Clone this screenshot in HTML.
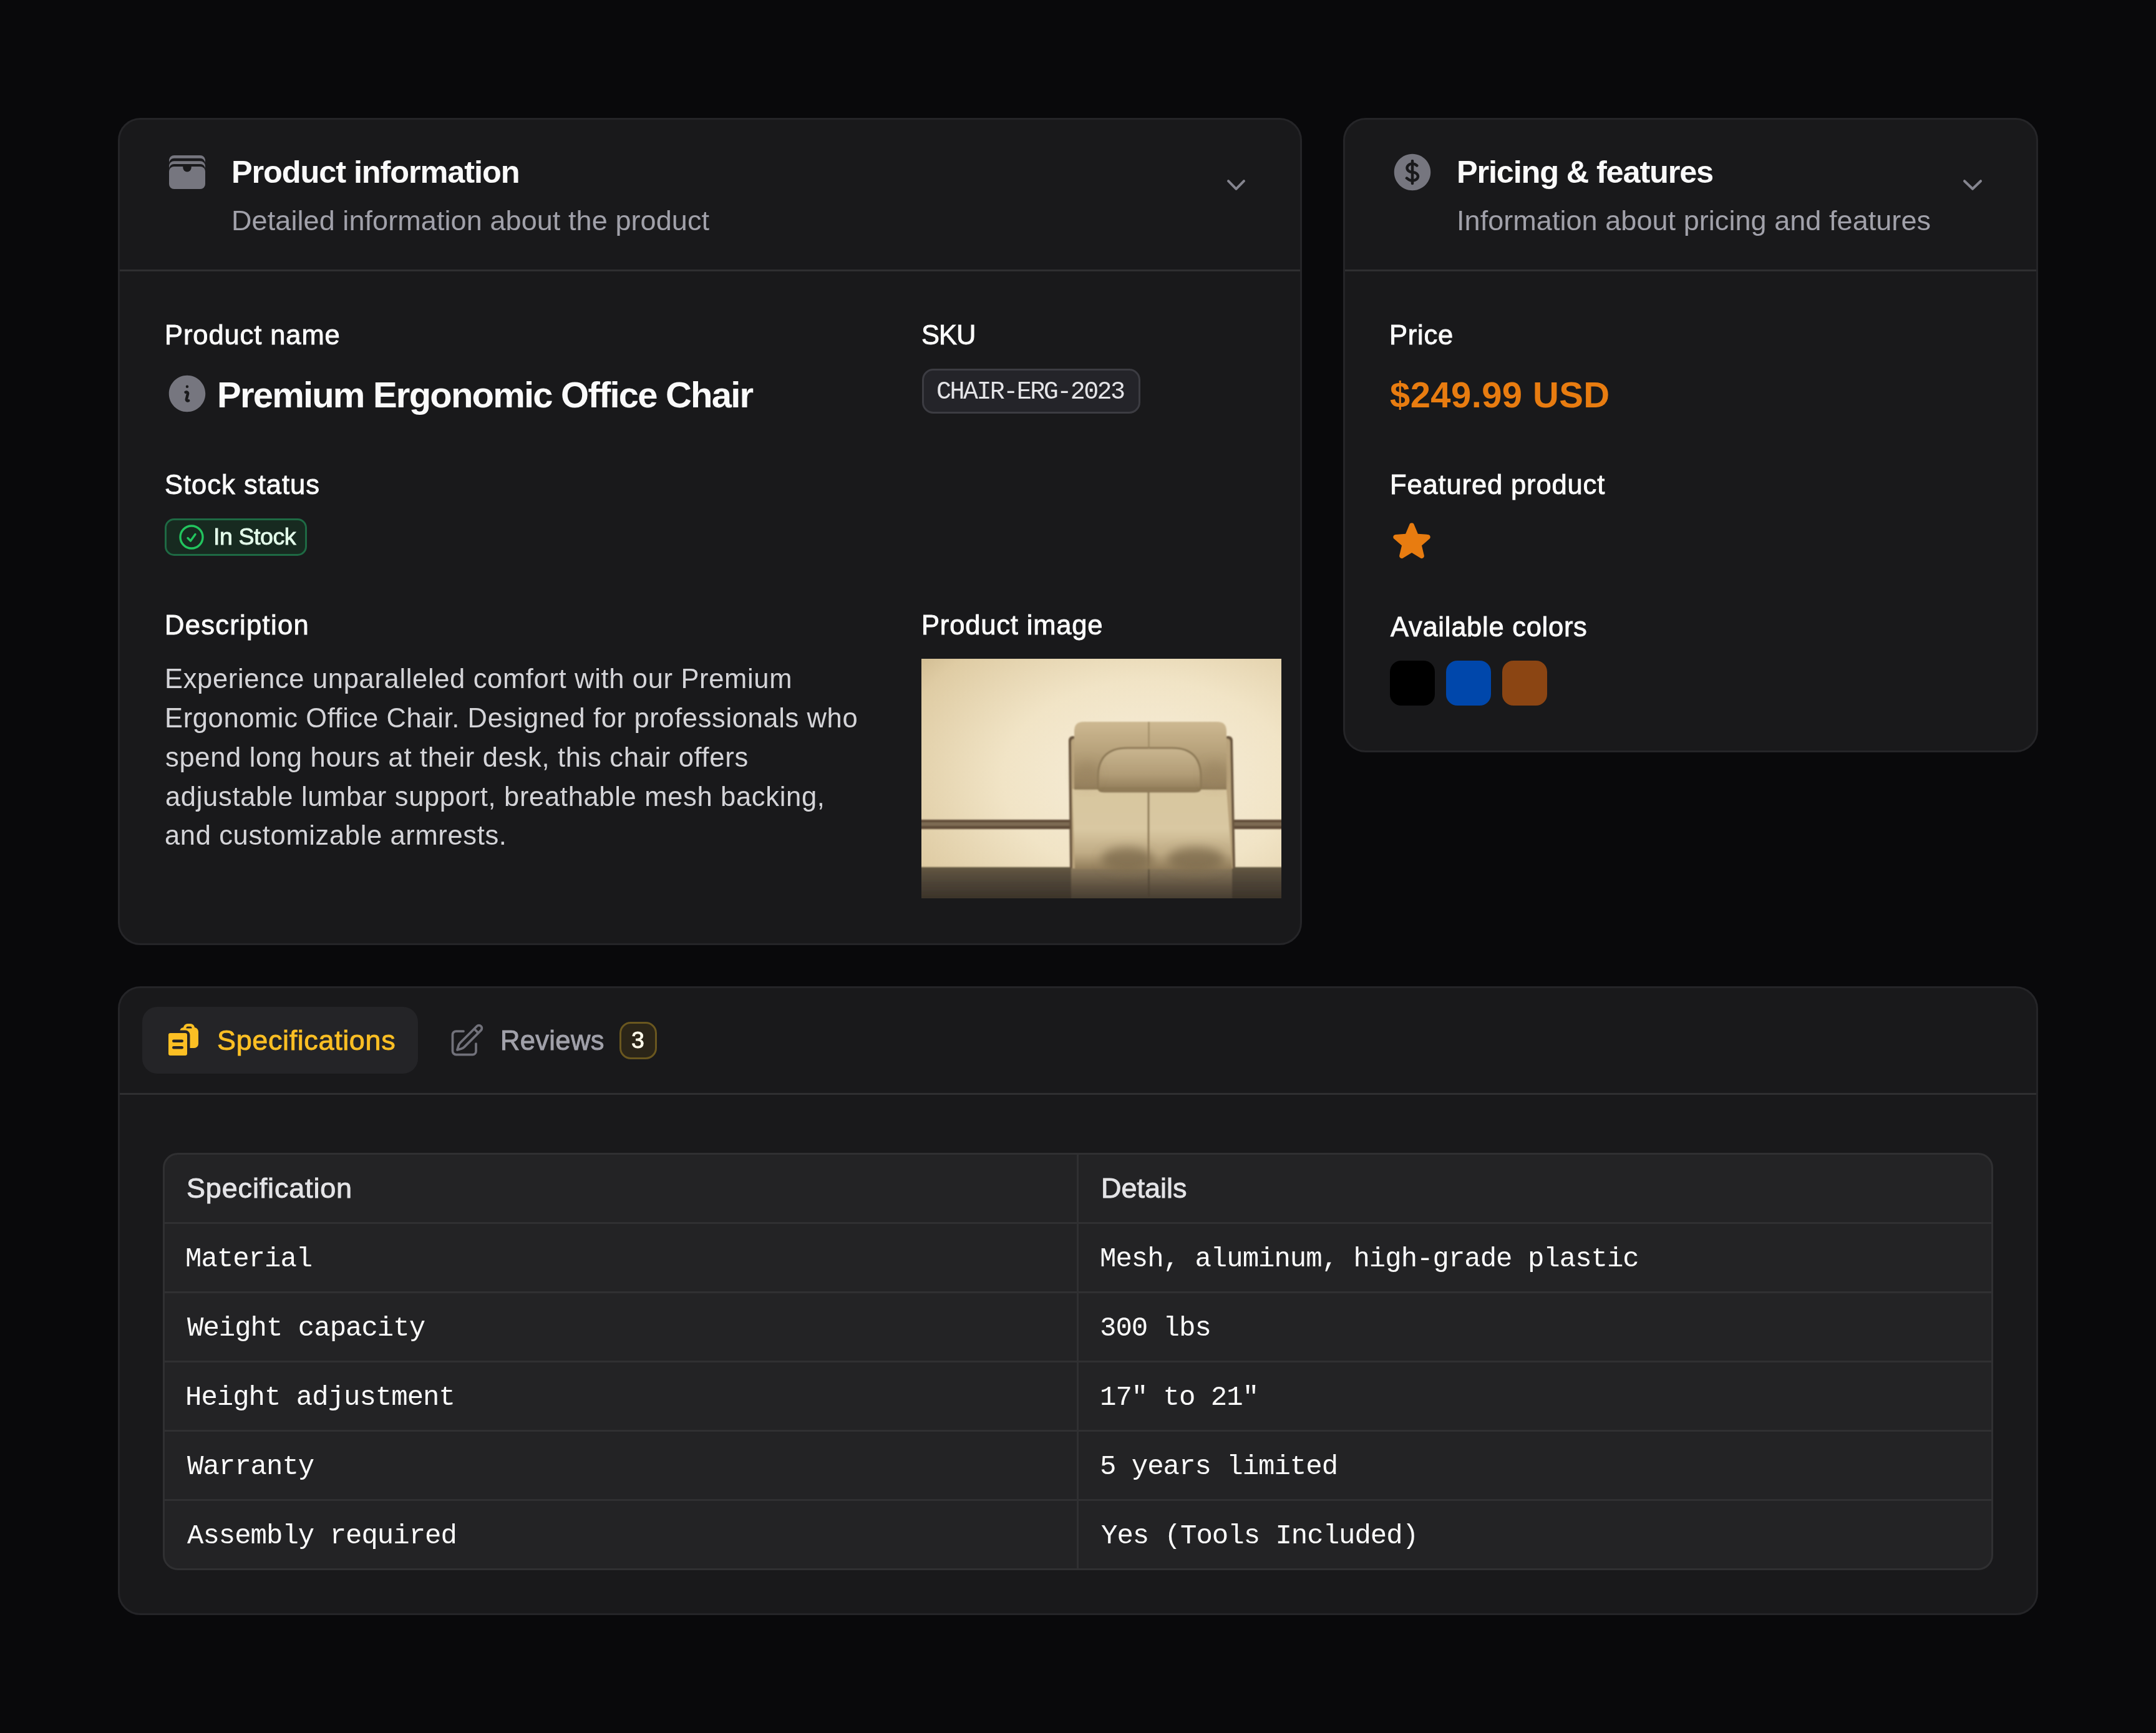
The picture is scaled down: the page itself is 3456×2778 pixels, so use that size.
<!DOCTYPE html><html><head><meta charset="utf-8"><style>
html,body{margin:0;padding:0;}html{overflow:hidden;background:#09090b;}
body{width:3456px;height:2778px;background:#09090b;position:relative;overflow:hidden;font-family:'Liberation Sans', sans-serif;}
.abs{position:absolute;}
.t{position:absolute;white-space:nowrap;line-height:1;will-change:transform;}
.card{position:absolute;box-sizing:border-box;background:#19191b;border:3px solid #252528;border-radius:36px;}
</style></head><body>
<div class="card" style="left:189px;top:189px;width:1898px;height:1326px"></div>
<div class="abs" style="left:192px;top:432px;width:1892px;height:3px;background:#2f2f31"></div>
<div class="card" style="left:2153px;top:189px;width:1114px;height:1017px"></div>
<div class="abs" style="left:2156px;top:432px;width:1108px;height:3px;background:#2f2f31"></div>
<div class="card" style="left:189px;top:1581px;width:3078px;height:1008px"></div>
<div class="abs" style="left:192px;top:1752px;width:3072px;height:3px;background:#2f2f31"></div>
<div class="abs" style="left:228px;top:1614px;width:442px;height:107px;border-radius:24px;background:#242427"></div>
<div class="abs" style="box-sizing:border-box;left:261px;top:1848px;width:2934px;height:669px;border:3px solid #303032;border-radius:24px;background:#232325"></div>
<div class="abs" style="left:264px;top:1959px;width:2928px;height:3px;background:#303032"></div>
<div class="abs" style="left:264px;top:2070px;width:2928px;height:3px;background:#303032"></div>
<div class="abs" style="left:264px;top:2181px;width:2928px;height:3px;background:#303032"></div>
<div class="abs" style="left:264px;top:2292px;width:2928px;height:3px;background:#303032"></div>
<div class="abs" style="left:264px;top:2403px;width:2928px;height:3px;background:#303032"></div>
<div class="abs" style="left:1726px;top:1851px;width:3px;height:2663px;height:663px;background:#303032"></div>
<div class="abs" style="box-sizing:border-box;left:1478px;top:591px;width:350px;height:72px;border:3px solid #3c3c42;border-radius:18px;background:#242429"></div>
<div class="abs" style="box-sizing:border-box;left:264px;top:831px;width:228px;height:60px;border:3px solid #1e6a44;border-radius:15px;background:#172a20"></div>
<div class="abs" style="box-sizing:border-box;left:993px;top:1638px;width:60px;height:60px;border:3px solid #6a571f;border-radius:18px;background:#2b2518"></div>
<div class="abs" style="left:2228px;top:1059px;width:72px;height:72px;border-radius:18px;background:#000000"></div>
<div class="abs" style="left:2318px;top:1059px;width:72px;height:72px;border-radius:18px;background:#0047ab"></div>
<div class="abs" style="left:2408px;top:1059px;width:72px;height:72px;border-radius:18px;background:#8b4513"></div>
<svg class="abs" style="left:0;top:0" width="400" height="400"><path fill="#76767f" d="M271,257 A8,8 0 0 1 279,249 H321 A8,8 0 0 1 329,257 V261.8 A8,8 0 0 0 321,253.8 H279 A8,8 0 0 0 271,261.8 Z M271,266.2 A8,8 0 0 1 279,258.2 H321 A8,8 0 0 1 329,266.2 V271.0 A8,8 0 0 0 321,263.0 H279 A8,8 0 0 0 271,271.0 Z"/><rect x="271" y="267" width="58" height="36" rx="8" fill="#76767f"/><path fill="#19191b" d="M293.3,266 H306.7 V268.8 A6.7,6.7 0 0 1 293.3,268.8 Z"/></svg>
<svg class="abs" style="left:264px;top:595px" width="72" height="72" viewBox="0 0 24 24"><path fill="#76767f" fill-rule="evenodd" d="M2.25 12c0-5.385 4.365-9.75 9.75-9.75s9.75 4.365 9.75 9.75-4.365 9.75-9.75 9.75S2.25 17.385 2.25 12Zm8.706-1.442c1.146-.573 2.437.463 2.126 1.706l-.709 2.836.042-.02a.75.75 0 0 1 .67 1.34l-.04.022c-1.147.573-2.438-.463-2.127-1.706l.71-2.836-.042.02a.75.75 0 1 1-.671-1.34l.041-.022ZM12 9a.75.75 0 1 0 0-1.5.75.75 0 0 0 0 1.5Z"/></svg>
<svg class="abs" style="left:2227.5px;top:240px" width="72" height="72" viewBox="0 0 24 24"><path fill="#76767f" d="M10.464 8.746c.227-.18.497-.311.786-.394v2.795a2.252 2.252 0 0 1-.786-.393c-.394-.313-.546-.681-.546-1.004 0-.323.152-.691.546-1.004ZM12.75 15.662v-2.824c.347.085.664.228.921.421.427.32.579.686.579.991 0 .305-.152.671-.579.991a2.534 2.534 0 0 1-.921.42Z"/><path fill="#76767f" fill-rule="evenodd" d="M12 2.25c-5.385 0-9.75 4.365-9.75 9.75s4.365 9.750 9.75 9.75 9.75-4.365 9.75-9.75S17.385 2.25 12 2.25ZM12.75 6a.75.75 0 0 0-1.5 0v.816a3.836 3.836 0 0 0-1.72.756c-.712.566-1.112 1.35-1.112 2.178 0 .829.4 1.612 1.113 2.178.502.4 1.102.647 1.719.756v2.978a2.536 2.536 0 0 1-.921-.421l-.879-.66a.75.75 0 0 0-.9 1.2l.879.66c.533.4 1.169.645 1.821.75V18a.75.75 0 0 0 1.5 0v-.81a4.124 4.124 0 0 0 1.821-.749c.745-.559 1.179-1.344 1.179-2.191 0-.847-.434-1.632-1.179-2.191a4.122 4.122 0 0 0-1.821-.75V8.354c.29.082.559.213.786.393l.415.33a.75.75 0 0 0 .933-1.175l-.415-.33a3.836 3.836 0 0 0-1.719-.755V6Z"/></svg>
<svg class="abs" style="left:0;top:0" width="3456" height="400"><polyline points="1969,290.2 1981.5,302.8 1994,290.2" fill="none" stroke="#85858f" stroke-width="4" stroke-linecap="round" stroke-linejoin="round"/></svg>
<svg class="abs" style="left:0;top:0" width="3456" height="400"><polyline points="3149,290.2 3162,302.8 3175,290.2" fill="none" stroke="#85858f" stroke-width="4" stroke-linecap="round" stroke-linejoin="round"/></svg>
<svg class="abs" style="left:282.5px;top:837px" width="48" height="48" viewBox="0 0 24 24" fill="none" stroke="#22c55e" stroke-width="1.7" stroke-linecap="round" stroke-linejoin="round"><path d="M9 12.75 11.25 15 15 9.75M21 12a9 9 0 1 1-18 0 9 9 0 0 1 18 0Z"/></svg>
<svg class="abs" style="left:2227px;top:831px" width="72" height="72" viewBox="0 0 24 24"><path fill="#e87c10" fill-rule="evenodd" d="M10.788 3.21c.448-1.077 1.976-1.077 2.424 0l2.082 5.006 5.404.434c1.164.093 1.636 1.545.749 2.305l-4.117 3.527 1.257 5.273c.271 1.136-.964 2.033-1.96 1.425L12 18.354 7.373 21.18c-.996.608-2.231-.29-1.96-1.425l1.257-5.273-4.117-3.527c-.887-.76-.415-2.212.749-2.305l5.404-.434 2.082-5.005Z"/></svg>
<svg class="abs" style="left:264px;top:1638px" width="60" height="60" viewBox="0 0 20 20" fill="#fbbf24"><path fill-rule="evenodd" d="M15.988 3.012A2.25 2.25 0 0 1 18 5.25v6.5A2.25 2.25 0 0 1 15.75 14H13.5V7A2.5 2.5 0 0 0 11 4.5H8.128a2.252 2.252 0 0 1 1.884-1.488A2.25 2.25 0 0 1 12.25 1h1.5a2.25 2.25 0 0 1 2.238 2.012ZM11.5 3.250a.75.75 0 0 1 .75-.75h1.5a.75.75 0 0 1 .75.75v.25h-3v-.25Z"/><path fill-rule="evenodd" d="M2 7a1 1 0 0 1 1-1h8a1 1 0 0 1 1 1v10a1 1 0 0 1-1 1H3a1 1 0 0 1-1-1V7Zm2 3.25a.75.75 0 0 1 .75-.75h4.5a.75.75 0 0 1 0 1.5h-4.5a.75.75 0 0 1-.75-.75Zm0 3.5a.75.75 0 0 1 .75-.75h4.5a.75.75 0 0 1 0 1.5h-4.5a.75.75 0 0 1-.75-.75Z"/></svg>
<svg class="abs" style="left:718.4px;top:1638px" width="60" height="60" viewBox="0 0 24 24" fill="none" stroke="#71717a" stroke-width="1.5" stroke-linecap="round" stroke-linejoin="round"><path d="m16.862 4.487 1.687-1.688a1.875 1.875 0 1 1 2.652 2.652L10.582 16.07a4.5 4.5 0 0 1-1.897 1.13L6 18l.8-2.685a4.5 4.5 0 0 1 1.13-1.897l8.932-8.931Zm0 0L19.5 7.125M18 14v4.75A2.25 2.25 0 0 1 15.75 21H5.25A2.25 2.25 0 0 1 3 18.75V8.25A2.25 2.25 0 0 1 5.25 6H10"/></svg>
<svg class="abs" style="left:1477px;top:1056px;overflow:hidden" width="577" height="384" viewBox="0 0 577 384">
<defs>
<radialGradient id="wall" cx="0.62" cy="0.5" r="0.85"><stop offset="0" stop-color="#f7eedb"/><stop offset="0.45" stop-color="#f1e4c6"/><stop offset="0.8" stop-color="#dfcca4"/><stop offset="1" stop-color="#c4ae82"/></radialGradient>
<linearGradient id="tbl" x1="0" y1="0" x2="0" y2="1"><stop offset="0" stop-color="#63574251"/><stop offset="0" stop-color="#635742"/><stop offset="0.4" stop-color="#4d4336"/><stop offset="1" stop-color="#342d24"/></linearGradient>
<linearGradient id="head" x1="0" y1="0" x2="0" y2="1"><stop offset="0" stop-color="#cdb891"/><stop offset="0.45" stop-color="#b7a27b"/><stop offset="1" stop-color="#927d5a"/></linearGradient>
<linearGradient id="pil" x1="0" y1="0" x2="0" y2="1"><stop offset="0" stop-color="#c9b58f"/><stop offset="0.6" stop-color="#b29d77"/><stop offset="1" stop-color="#8e7957"/></linearGradient>
<linearGradient id="cush" x1="0" y1="0" x2="0" y2="1"><stop offset="0" stop-color="#d8c69f"/><stop offset="0.5" stop-color="#d9c8a2"/><stop offset="0.8" stop-color="#bfab85"/><stop offset="1" stop-color="#927d5a"/></linearGradient>
<linearGradient id="refl" x1="0" y1="0" x2="0" y2="1"><stop offset="0" stop-color="#8c7b5e"/><stop offset="0.5" stop-color="#5e5140"/><stop offset="1" stop-color="#3b332a"/></linearGradient>
<radialGradient id="shade" cx="0.5" cy="0.5" r="0.5"><stop offset="0" stop-color="#8f7a58" stop-opacity="0.85"/><stop offset="1" stop-color="#8f7a58" stop-opacity="0"/></radialGradient>
<filter id="bl" x="-5%" y="-5%" width="110%" height="110%"><feGaussianBlur stdDeviation="1.2"/></filter>
<filter id="bl2" x="-50%" y="-50%" width="200%" height="200%"><feGaussianBlur stdDeviation="8"/></filter>
</defs>
<rect x="-12" y="-12" width="601" height="408" fill="url(#wall)"/>
<g filter="url(#bl)">
<rect x="-12" y="258" width="601" height="15" fill="#5f4c37"/>
<rect x="-12" y="262" width="601" height="6" fill="#7d6a52"/>
<rect x="-12" y="334" width="601" height="62" fill="url(#tbl)"/>
<rect x="240" y="334" width="258" height="62" fill="url(#refl)"/>
<rect x="363" y="334" width="3" height="62" fill="#4a3f30" opacity="0.6"/>
<path d="M236,132 Q236,124 243,124 L492,124 Q499,124 499,132 L503,336 L238,336 Z" fill="#6a573f"/>
<path d="M240,134 Q240,128 245,128 L490,128 Q495,128 495,134 L499,336 L242,336 Z" fill="#b9a37c"/>
<path d="M245,116 Q245,101 260,101 L474,101 Q489,101 489,116 L489,209 L245,209 Z" fill="url(#head)"/>
<path d="M242,209 L365,209 L365,337 L246,337 Z" fill="url(#cush)"/>
<path d="M365,209 L489,209 L498,337 L365,337 Z" fill="url(#cush)"/>
<path d="M283,190 Q283,143 330,143 L402,143 Q448,143 448,190 L448,205 Q448,213 438,213 L293,213 Q283,213 283,205 Z" fill="url(#pil)" stroke="#8d7956" stroke-width="3"/>
<rect x="245" y="206" width="244" height="4" fill="#8e7a58" opacity="0.8"/>
<rect x="363.5" y="101" width="2" height="43" fill="#9a8561"/>
<rect x="362.5" y="212" width="3" height="125" fill="#8f7b59"/>
</g>
<g filter="url(#bl2)">
<ellipse cx="330" cy="322" rx="42" ry="20" fill="#7d6a4c" opacity="0.8"/>
<ellipse cx="440" cy="322" rx="46" ry="20" fill="#7d6a4c" opacity="0.8"/>
<ellipse cx="265" cy="185" rx="18" ry="20" fill="#9a8460" opacity="0.5"/>
<ellipse cx="470" cy="185" rx="18" ry="20" fill="#9a8460" opacity="0.5"/>
</g>
</svg>

<div class="t" style="left:371px;top:251px;font-family:'Liberation Sans', sans-serif;font-weight:700;font-size:50.5px;letter-spacing:-1.111px;color:#fafafa">Product information</div>
<div class="t" style="left:371px;top:331px;font-family:'Liberation Sans', sans-serif;font-weight:400;font-size:45px;letter-spacing:0.081px;color:#a1a1aa">Detailed information about the product</div>
<div class="t" style="left:2335px;top:251px;font-family:'Liberation Sans', sans-serif;font-weight:700;font-size:50.5px;letter-spacing:-1.176px;color:#fafafa">Pricing &amp; features</div>
<div class="t" style="left:2335px;top:331px;font-family:'Liberation Sans', sans-serif;font-weight:400;font-size:45px;letter-spacing:0.054px;color:#a1a1aa">Information about pricing and features</div>
<div class="t" style="left:264px;top:516px;font-family:'Liberation Sans', sans-serif;font-weight:400;font-size:43.5px;letter-spacing:0.909px;color:#fafafa;-webkit-text-stroke:0.9px #fafafa">Product name</div>
<div class="t" style="left:348px;top:604px;font-family:'Liberation Sans', sans-serif;font-weight:700;font-size:58px;letter-spacing:-1.793px;color:#fafafa">Premium Ergonomic Office Chair</div>
<div class="t" style="left:1477px;top:516px;font-family:'Liberation Sans', sans-serif;font-weight:400;font-size:43.5px;letter-spacing:-1.0px;color:#fafafa;-webkit-text-stroke:0.9px #fafafa">SKU</div>
<div class="t" style="left:1501px;top:609px;font-family:'Liberation Mono', monospace;font-weight:400;font-size:40px;letter-spacing:-2.538px;color:#e4e4e7">CHAIR-ERG-2023</div>
<div class="t" style="left:264px;top:756px;font-family:'Liberation Sans', sans-serif;font-weight:400;font-size:43.5px;letter-spacing:1.0px;color:#fafafa;-webkit-text-stroke:0.9px #fafafa">Stock status</div>
<div class="t" style="left:342px;top:842px;font-family:'Liberation Sans', sans-serif;font-weight:400;font-size:37.5px;letter-spacing:-0.429px;color:#e3fbea;-webkit-text-stroke:0.9px #e3fbea">In Stock</div>
<div class="t" style="left:264px;top:981px;font-family:'Liberation Sans', sans-serif;font-weight:400;font-size:43.5px;letter-spacing:1.3px;color:#fafafa;-webkit-text-stroke:0.9px #fafafa">Description</div>
<div class="t" style="left:264px;top:1067px;font-family:'Liberation Sans', sans-serif;font-weight:400;font-size:43.5px;letter-spacing:0.66px;color:#d4d4d8">Experience unparalleled comfort with our Premium</div>
<div class="t" style="left:264px;top:1130px;font-family:'Liberation Sans', sans-serif;font-weight:400;font-size:43.5px;letter-spacing:0.623px;color:#d4d4d8">Ergonomic Office Chair. Designed for professionals who</div>
<div class="t" style="left:265px;top:1193px;font-family:'Liberation Sans', sans-serif;font-weight:400;font-size:43.5px;letter-spacing:0.688px;color:#d4d4d8">spend long hours at their desk, this chair offers</div>
<div class="t" style="left:265px;top:1256px;font-family:'Liberation Sans', sans-serif;font-weight:400;font-size:43.5px;letter-spacing:0.68px;color:#d4d4d8">adjustable lumbar support, breathable mesh backing,</div>
<div class="t" style="left:264px;top:1318px;font-family:'Liberation Sans', sans-serif;font-weight:400;font-size:43.5px;letter-spacing:0.64px;color:#d4d4d8">and customizable armrests.</div>
<div class="t" style="left:1477px;top:981px;font-family:'Liberation Sans', sans-serif;font-weight:400;font-size:43.5px;letter-spacing:0.833px;color:#fafafa;-webkit-text-stroke:0.9px #fafafa">Product image</div>
<div class="t" style="left:2227px;top:516px;font-family:'Liberation Sans', sans-serif;font-weight:400;font-size:43.5px;letter-spacing:0.75px;color:#fafafa;-webkit-text-stroke:0.9px #fafafa">Price</div>
<div class="t" style="left:2228px;top:604px;font-family:'Liberation Sans', sans-serif;font-weight:700;font-size:58px;letter-spacing:0.4px;color:#e87c10">$249.99 USD</div>
<div class="t" style="left:2228px;top:756px;font-family:'Liberation Sans', sans-serif;font-weight:400;font-size:43.5px;letter-spacing:0.867px;color:#fafafa;-webkit-text-stroke:0.9px #fafafa">Featured product</div>
<div class="t" style="left:2229px;top:984px;font-family:'Liberation Sans', sans-serif;font-weight:400;font-size:43.5px;letter-spacing:0.733px;color:#fafafa;-webkit-text-stroke:0.9px #fafafa">Available colors</div>
<div class="t" style="left:348px;top:1645px;font-family:'Liberation Sans', sans-serif;font-weight:400;font-size:45px;letter-spacing:0.615px;color:#fbbf24;-webkit-text-stroke:0.9px #fbbf24">Specifications</div>
<div class="t" style="left:802px;top:1647px;font-family:'Liberation Sans', sans-serif;font-weight:400;font-size:43.5px;letter-spacing:0.333px;color:#a1a1aa;-webkit-text-stroke:0.9px #a1a1aa">Reviews</div>
<div class="t" style="left:1012px;top:1649px;font-family:'Liberation Sans', sans-serif;font-weight:400;font-size:37.5px;letter-spacing:0px;color:#fffbeb;-webkit-text-stroke:0.9px #fffbeb">3</div>
<div class="t" style="left:299px;top:1882px;font-family:'Liberation Sans', sans-serif;font-weight:400;font-size:45px;letter-spacing:0.833px;color:#e4e4e7;-webkit-text-stroke:0.9px #e4e4e7">Specification</div>
<div class="t" style="left:1765px;top:1882px;font-family:'Liberation Sans', sans-serif;font-weight:400;font-size:45px;letter-spacing:0.0px;color:#e4e4e7;-webkit-text-stroke:0.9px #e4e4e7">Details</div>
<div class="t" style="left:297px;top:1996px;font-family:'Liberation Mono', monospace;font-weight:400;font-size:44px;letter-spacing:-1.0px;color:#fafafa">Material</div>
<div class="t" style="left:1763px;top:1996px;font-family:'Liberation Mono', monospace;font-weight:400;font-size:44px;letter-spacing:-1.0px;color:#fafafa">Mesh, aluminum, high-grade plastic</div>
<div class="t" style="left:300px;top:2107px;font-family:'Liberation Mono', monospace;font-weight:400;font-size:44px;letter-spacing:-1.0px;color:#fafafa">Weight capacity</div>
<div class="t" style="left:1763px;top:2107px;font-family:'Liberation Mono', monospace;font-weight:400;font-size:44px;letter-spacing:-1.0px;color:#fafafa">300 lbs</div>
<div class="t" style="left:297px;top:2218px;font-family:'Liberation Mono', monospace;font-weight:400;font-size:44px;letter-spacing:-1.0px;color:#fafafa">Height adjustment</div>
<div class="t" style="left:1763px;top:2218px;font-family:'Liberation Mono', monospace;font-weight:400;font-size:44px;letter-spacing:-1.0px;color:#fafafa">17&quot; to 21&quot;</div>
<div class="t" style="left:300px;top:2329px;font-family:'Liberation Mono', monospace;font-weight:400;font-size:44px;letter-spacing:-1.0px;color:#fafafa">Warranty</div>
<div class="t" style="left:1763px;top:2329px;font-family:'Liberation Mono', monospace;font-weight:400;font-size:44px;letter-spacing:-1.0px;color:#fafafa">5 years limited</div>
<div class="t" style="left:300px;top:2440px;font-family:'Liberation Mono', monospace;font-weight:400;font-size:44px;letter-spacing:-1.0px;color:#fafafa">Assembly required</div>
<div class="t" style="left:1765px;top:2440px;font-family:'Liberation Mono', monospace;font-weight:400;font-size:44px;letter-spacing:-1.0px;color:#fafafa">Yes (Tools Included)</div>
<script>(function(){var w=window.innerWidth;if(w&&Math.abs(w-3456)>4){document.body.style.zoom=(w/3456);}})();</script>
</body></html>
